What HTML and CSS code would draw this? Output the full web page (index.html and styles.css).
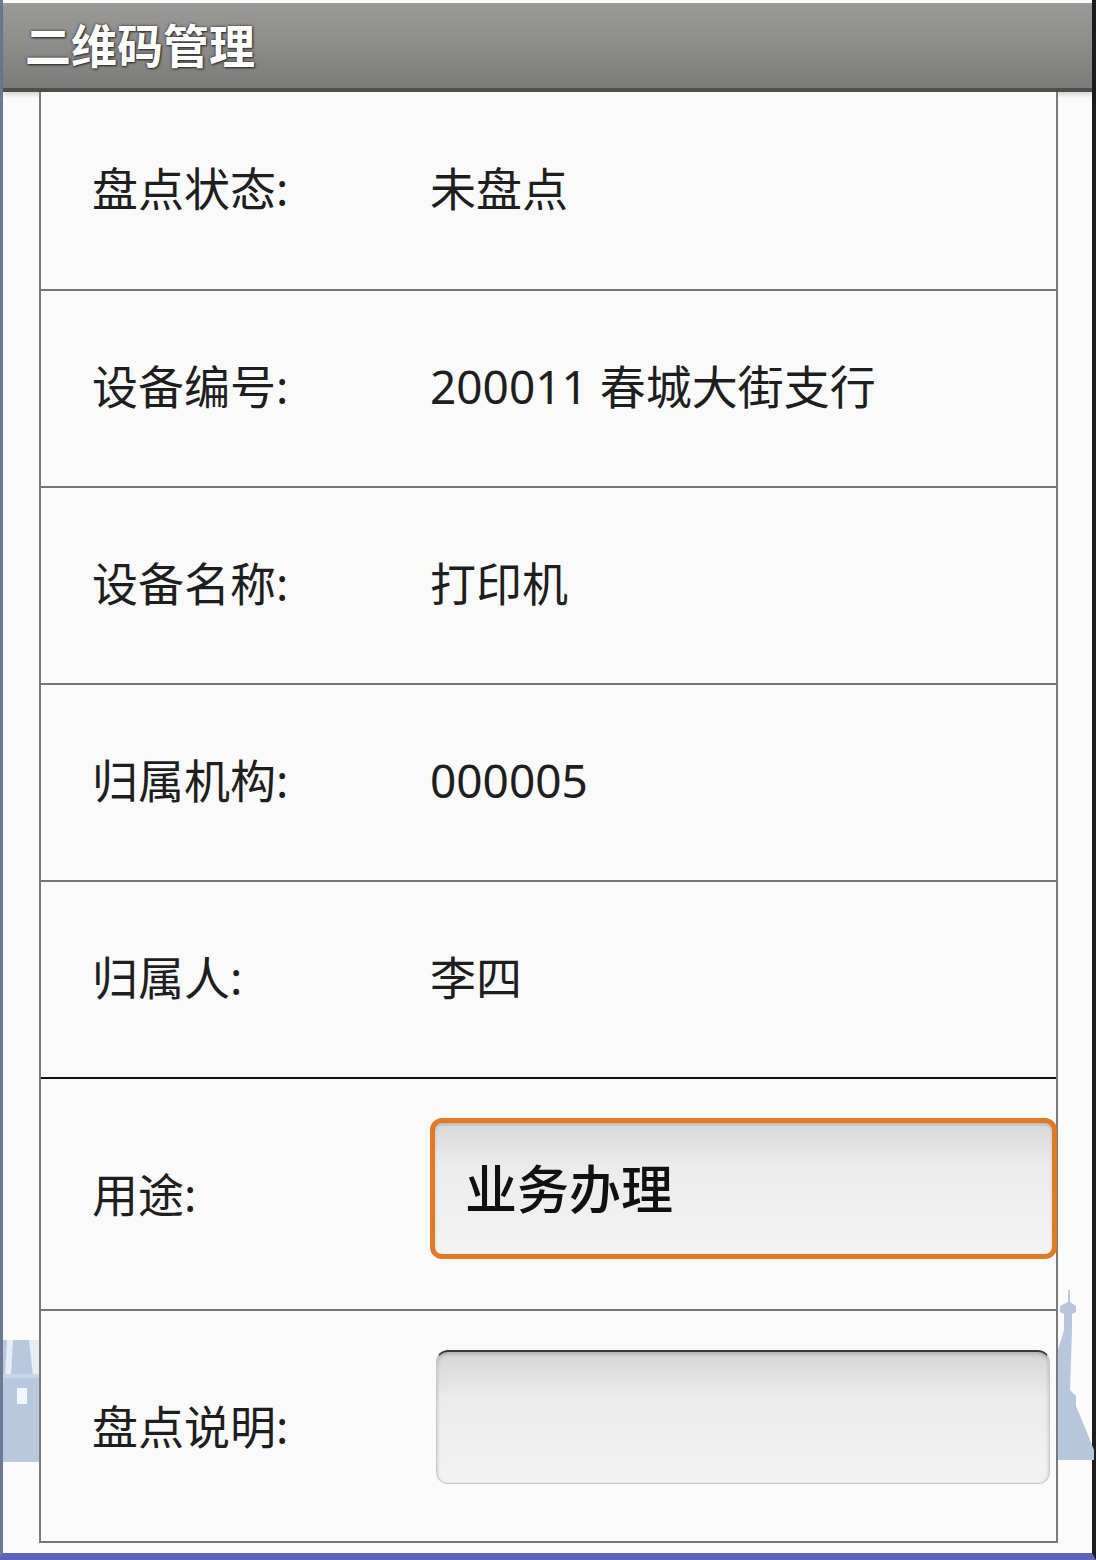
FILE: index.html
```html
<!DOCTYPE html>
<html lang="zh-CN">
<head>
<meta charset="utf-8">
<title>二维码管理</title>
<link rel="stylesheet" href="styles.css">
</head>
<body>
<div class="screen">
  <svg class="deco deco-left" width="36" height="122" viewBox="0 0 36 122">
    <rect x="0" y="0" width="36" height="122" fill="#b9c9dd"/>
    <path d="M4 0 L2 36 L8 36 L10 0 Z" fill="#e6edf5"/>
    <path d="M26 0 L30 36 L36 36 L36 0 Z" fill="#e6edf5"/>
    <rect x="14" y="48" width="10" height="16" fill="#f2f5f9"/>
    <rect x="0" y="34" width="36" height="4" fill="#c9d6e6"/>
  </svg>
  <svg class="deco deco-right" width="36" height="170" viewBox="0 0 36 170">
    <path d="M10 0 L12 0 L12 12 L18 16 L18 22 L14 24 L14 40 L12 100 L18 106 L18 116 L28 140 L36 160 L36 170 L0 170 L0 60 L6 40 L6 24 L2 22 L2 16 L10 12 Z" fill="#b7c7dc"/>
  </svg>

  <header class="titlebar">
    <h1 class="title">二维码管理</h1>
  </header>

  <main class="card">
    <div class="row">
      <div class="label">盘点状态:</div>
      <div class="value">未盘点</div>
    </div>
    <div class="row">
      <div class="label">设备编号:</div>
      <div class="value">200011 春城大街支行</div>
    </div>
    <div class="row">
      <div class="label">设备名称:</div>
      <div class="value">打印机</div>
    </div>
    <div class="row">
      <div class="label">归属机构:</div>
      <div class="value">000005</div>
    </div>
    <div class="row row-dark">
      <div class="label">归属人:</div>
      <div class="value">李四</div>
    </div>
    <div class="row row-tall">
      <div class="label">用途:</div>
      <div class="field field-focus">业务办理</div>
    </div>
    <div class="row row-tall row-last">
      <div class="label">盘点说明:</div>
      <div class="field field-empty"></div>
    </div>
  </main>
</div>
</body>
</html>
```

FILE: styles.css
```css
html, body {
  margin: 0;
  padding: 0;
}

body {
  width: 1096px;
  height: 1560px;
  overflow: hidden;
  background: #fafafa;
  font-family: "Noto Sans", "Noto Sans CJK SC", sans-serif;
  color: #1e1e1e;
}

.screen {
  position: relative;
  box-sizing: border-box;
  width: 1096px;
  height: 1560px;
  border-left: 3px solid #6d7897;
  border-right: 4px solid #1d1d1d;
  border-bottom: 7px solid #5d65ba;
  padding-top: 3px;
  background: #fbfbfb;
}

.deco {
  position: absolute;
  display: block;
}

.deco-left {
  left: 0;
  top: 1340px;
}

.deco-right {
  left: 1055px;
  top: 1290px;
}

.titlebar {
  position: relative;
  height: 85px;
  background: linear-gradient(to bottom, #9a9a99 0%, #8c8c8b 50%, #7b7b7a 100%);
  border-bottom: 4px solid #4e4e4e;
  display: flex;
  align-items: center;
  padding-left: 22px;
  box-shadow: 0 3px 4px rgba(0, 0, 0, 0.15);
}

.title {
  margin: 0;
  font-family: "Noto Sans CJK SC", sans-serif;
  font-size: 46px;
  font-weight: 700;
  color: #ffffff;
  line-height: 1;
  text-shadow: 0 0 3px #2a2a2a, 1px 1px 2px #333;
  transform: translateY(-3px);
}

.card {
  position: relative;
  box-sizing: border-box;
  margin-left: 36px;
  width: 1019px;
  background: #fafafa;
  border-left: 2px solid #7a7a7a;
  border-right: 2px solid #7a7a7a;
  display: flex;
  flex-direction: column;
}

.row {
  box-sizing: border-box;
  height: 197px;
  border-bottom: 2px solid #767676;
  display: flex;
  align-items: center;
  padding-left: 51px;
  padding-bottom: 6px;
}

.row:first-child {
  height: 199px;
}

.row-dark {
  border-bottom-color: #111111;
}

.row-tall {
  height: 232px;
  padding-bottom: 0;
}

.row-last {
  height: 232px;
}

.label {
  width: 338px;
  flex: none;
  font-size: 46px;
  line-height: 1;
  color: #1e1e1e;
}

.value {
  font-size: 46px;
  line-height: 1;
  color: #1e1e1e;
}

.field {
  box-sizing: border-box;
  border-radius: 12px;
  display: flex;
  align-items: center;
}

.field-focus {
  width: 628px;
  height: 141px;
  margin-right: -1px;
  border: 5px solid #e07a24;
  background: linear-gradient(to bottom, #d9d9d9 0%, #ececec 35%, #f4f4f4 100%);
  padding-left: 30px;
  padding-bottom: 4px;
  font-family: "Noto Sans CJK SC", sans-serif;
  font-size: 52px;
  font-weight: 500;
  color: #111;
  box-shadow: inset 0 2px 3px rgba(0, 0, 0, 0.15);
  transform: translateY(-6px);
}

.field-empty {
  width: 614px;
  height: 134px;
  margin-left: 6px;
  border: 1px solid #c8c8c8;
  border-top: 2px solid #3a3a3a;
  background: linear-gradient(to bottom, #d6d6d6 0%, #ebebeb 35%, #f3f3f3 100%);
  box-shadow: inset 0 2px 4px rgba(0, 0, 0, 0.2);
  transform: translateY(-9px);
}
```
